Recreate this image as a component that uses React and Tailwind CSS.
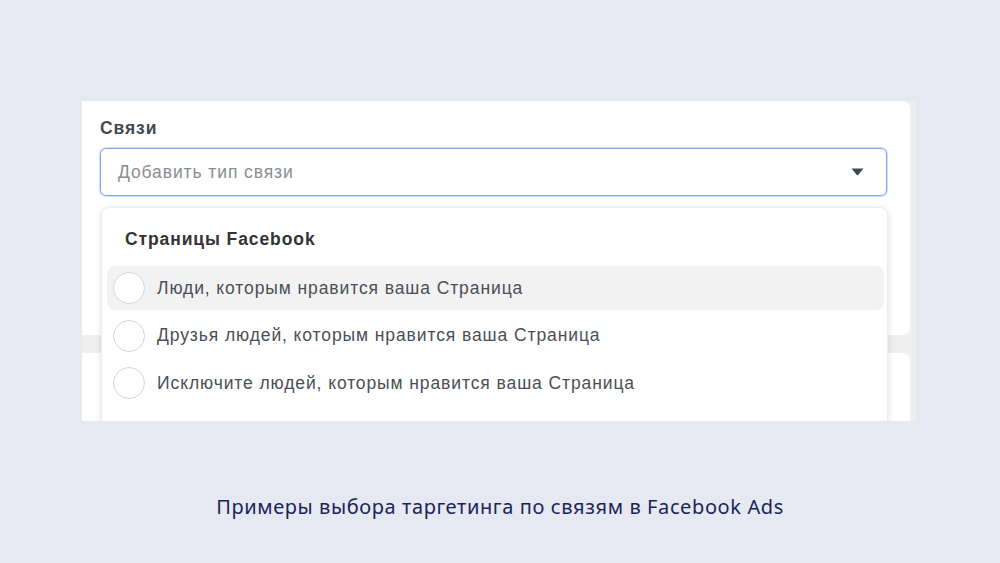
import React from 'react';

const options = [
  'Люди, которым нравится ваша Страница',
  'Друзья людей, которым нравится ваша Страница',
  'Исключите людей, которым нравится ваша Страница',
];

function Option({ label, active }) {
  return (
    <div className={`flex items-center gap-3 h-[44px] px-1.5 rounded-lg ${active ? 'bg-[#f2f2f2]' : ''}`}>
      <span className="w-8 h-8 rounded-full bg-white border border-[#d3d5d8] shrink-0" />
      <span className="text-[17.5px] tracking-[0.9px] text-[#4b4f56]">{label}</span>
    </div>
  );
}

export default function App() {
  return (
    <div className="w-[1000px] h-[563px] bg-[#e6e9f1] pt-[101px] font-['Liberation_Sans',Arial,sans-serif]">
      {/* screenshot */}
      <div className="relative ml-[82px] w-[834px] h-[320px] overflow-hidden bg-[#efeff0]">
        <div className="w-[828px] h-[234px] bg-white rounded-r-lg px-[18px] pt-[16px]">
          <p className="text-[17.5px] tracking-[0.9px] font-bold text-[#444950] leading-[22px]">Связи</p>
          <div className="mt-[9px] w-[787px] h-[48px] rounded-md border border-[#7ea6ee] shadow-[0_0_0_1px_rgba(126,166,238,0.35)] flex items-center justify-between pl-[17px] pr-[22px]">
            <span className="text-[17.5px] tracking-[0.9px] text-[#8a8d91]">Добавить тип связи</span>
            <svg width="13" height="8" viewBox="0 0 13 8">
              <path d="M0.5 0.5 H12.5 L7.2 7 Q6.5 7.7 5.8 7 Z" fill="#444950" />
            </svg>
          </div>
        </div>
        <div className="mt-[18px] w-[828px] h-[100px] bg-white rounded-tr-lg" />

        {/* dropdown menu */}
        <div className="absolute left-[19px] top-[106px] w-[787px] h-[240px] bg-white rounded-lg shadow-[0_1px_6px_rgba(0,0,0,0.12)] border border-[#ececec] pl-[5px] pr-[3px] pt-[20px]">
          <p className="pl-[18px] text-[17.5px] tracking-[0.9px] font-bold text-[#333] leading-[22px]">Страницы Facebook</p>
          <div className="mt-[16px] flex flex-col gap-[3.5px]">
            {options.map((o, i) => (
              <Option key={o} label={o} active={i === 0} />
            ))}
          </div>
        </div>
      </div>

      <p className="mt-[71px] text-center text-[20px] tracking-[0.6px] text-[#1b2457] font-['Noto_Sans',sans-serif]">
        Примеры выбора таргетинга по связям в Facebook Ads
      </p>
    </div>
  );
}
